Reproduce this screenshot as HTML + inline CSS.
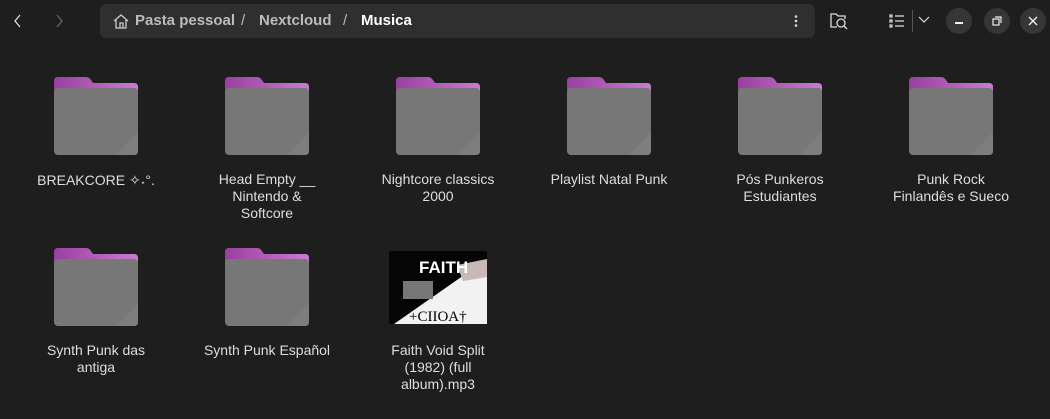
<!DOCTYPE html><html><head><style>
body{margin:0;width:1050px;height:419px;background:#1e1e1e;font-family:"Liberation Sans",sans-serif;overflow:hidden;position:relative;color:#dedede}
.a{position:absolute}
.bc{left:100px;top:4px;width:715px;height:34px;background:#2f2f2f;border-radius:6px}
.bc span{position:absolute;top:8px;font-size:15px;color:#bcbcbc;font-weight:bold}
.btn{width:26px;height:26px;border-radius:50%;background:#363636;top:8px}
.it{position:absolute;width:150px;text-align:center;font-size:14px;line-height:17px}
.f{position:absolute;width:84px;height:78px}
</style></head><body>
<svg class="a" style="left:10px;top:12px" width="60" height="18"><path d="M10 3 L5 9 L10 15" stroke="#ddd" fill="none" stroke-width="1.3"/><path d="M47 3 L52 9 L47 15" stroke="#666" fill="none" stroke-width="1.3"/></svg>
<div class="a bc">
<svg class="a" style="left:12px;top:9px" width="18" height="17"><path d="M2 8 L9 2 L16 8 M4 7 V15 H14 V7 M8 15 V10 H11 V15" stroke="#ccc" fill="none" stroke-width="1.3"/></svg>
<span style="left:35px">Pasta pessoal</span>
<span style="left:141px;font-weight:normal">/</span>
<span style="left:159px">Nextcloud</span>
<span style="left:243px;font-weight:normal">/</span>
<span style="left:261px;color:#fff">Musica</span>
<svg class="a" style="left:693px;top:10px" width="6" height="14"><circle cx="3" cy="2.5" r="1.3" fill="#ddd"/><circle cx="3" cy="7" r="1.3" fill="#ddd"/><circle cx="3" cy="11.5" r="1.3" fill="#ddd"/></svg>
</div>
<svg class="a" style="left:829px;top:12px" width="20" height="18"><path d="M8 15 H2 V2 H7 L9 4 H16 V7" stroke="#ddd" fill="none" stroke-width="1.3"/><circle cx="12" cy="11" r="4" stroke="#ddd" fill="none" stroke-width="1.3"/><path d="M15 14 L18 17" stroke="#ddd" stroke-width="1.3"/></svg>
<svg class="a" style="left:889px;top:14px" width="16" height="14"><g fill="none" stroke="#ddd" stroke-width="1.2"><rect x="1" y="1" width="2" height="2"/><rect x="1" y="6" width="2" height="2"/><rect x="1" y="11" width="2" height="2"/><path d="M6 2 H15 M6 7 H15 M6 12 H15"/></g></svg>
<div class="a" style="left:912px;top:10px;width:1px;height:22px;background:#555"></div>
<svg class="a" style="left:918px;top:16px" width="12" height="8"><path d="M1 1 L6 6 L11 1" stroke="#ddd" fill="none" stroke-width="1.2"/></svg>
<div class="a btn" style="left:946px"><div class="a" style="left:9px;top:14px;width:8px;height:1.5px;background:#eee"></div></div>
<div class="a btn" style="left:984px"><svg class="a" style="left:8px;top:8px" width="10" height="10"><rect x="1" y="3" width="6" height="6" fill="none" stroke="#eee" stroke-width="1.2"/><path d="M3 1 H9 V7" fill="none" stroke="#eee" stroke-width="1.2"/></svg></div>
<div class="a btn" style="left:1020px"><svg class="a" style="left:8px;top:8px" width="10" height="10"><path d="M1 1 L9 9 M9 1 L1 9" stroke="#eee" stroke-width="1.4"/></svg></div>

<svg width="0" height="0" style="position:absolute"><defs>
<linearGradient id="p" x1="0" x2="1"><stop offset="0" stop-color="#9a3fa0"/><stop offset="1" stop-color="#c97ccd"/></linearGradient>
<symbol id="fd" viewBox="0 0 84 78"><path d="M4 0 H32 Q35 0 37 3 L39 6 H80 Q84 6 84 10 V30 H0 V4 Q0 0 4 0Z" fill="url(#p)"/><rect x="0" y="11" width="84" height="67" rx="4" fill="#777"/><path d="M84 55 V74 Q84 78 80 78 H62Z" fill="#7e7e7e"/></symbol>
</defs></svg>

<svg class="f" style="left:54px;top:77px"><use href="#fd"/></svg>
<svg class="f" style="left:225px;top:77px"><use href="#fd"/></svg>
<svg class="f" style="left:396px;top:77px"><use href="#fd"/></svg>
<svg class="f" style="left:567px;top:77px"><use href="#fd"/></svg>
<svg class="f" style="left:738px;top:77px"><use href="#fd"/></svg>
<svg class="f" style="left:909px;top:77px"><use href="#fd"/></svg>
<svg class="f" style="left:54px;top:248px"><use href="#fd"/></svg>
<svg class="f" style="left:225px;top:248px"><use href="#fd"/></svg>

<div class="it" style="left:21px;top:172px">BREAKCORE ✧˖°.</div>
<div class="it" style="left:192px;top:171px">Head Empty __<br>Nintendo &amp;<br>Softcore</div>
<div class="it" style="left:363px;top:171px">Nightcore classics<br>2000</div>
<div class="it" style="left:534px;top:171px">Playlist Natal Punk</div>
<div class="it" style="left:705px;top:171px">Pós Punkeros<br>Estudiantes</div>
<div class="it" style="left:876px;top:171px">Punk Rock<br>Finlandês e Sueco</div>
<div class="it" style="left:21px;top:342px">Synth Punk das<br>antiga</div>
<div class="it" style="left:192px;top:342px">Synth Punk Español</div>
<div class="it" style="left:363px;top:342px">Faith Void Split<br>(1982) (full<br>album).mp3</div>

<svg class="a" style="left:389px;top:251px" width="98" height="73">
<rect width="98" height="73" rx="2" fill="#050505"/>
<path d="M98 8 V73 H5 Z" fill="#f2f2f2"/>
<path d="M68 14 L98 8 V26 L74 30Z" fill="#c8b8b8"/>
<text x="30" y="22" font-size="17" font-weight="bold" fill="#fff" font-family="Liberation Sans">FAITH</text>
<rect x="14" y="30" width="30" height="18" fill="#777"/>
<text x="20" y="70" font-size="15" fill="#000" font-family="Liberation Serif">+CIIOA†</text>
</svg>
</body></html>
